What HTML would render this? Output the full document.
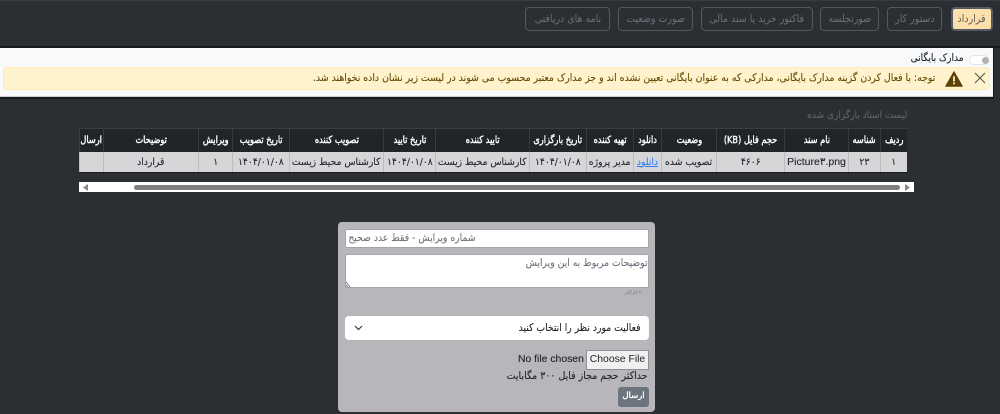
<!DOCTYPE html>
<html lang="fa" dir="rtl"><head><meta charset="utf-8"><title>مدارک</title>
<style>
html,body{margin:0;padding:0;width:1000px;height:414px;overflow:hidden;background:#2b2f33;}
body{position:relative;font-family:"DejaVu Sans","Liberation Sans",sans-serif;font-size:10px;color:#212529;}
.a{position:absolute;box-sizing:border-box;}
.t{position:absolute;white-space:nowrap;direction:rtl;transform-origin:right center;transform:scaleX(.9);-webkit-text-stroke:.12px currentColor;}
.b,.c{position:absolute;box-sizing:border-box;display:flex;justify-content:center;align-items:center;white-space:nowrap;direction:rtl;}
.b{top:7px;height:24px;border:1px solid #53585d;border-radius:4px;color:#6c7177;font-size:10.5px;}
.b span{display:block;flex:none;transform:scaleX(.9);}
.h{top:129px;height:23px;background:#212529;color:#fff;font-size:10px;border-left:1px solid #373b3f;-webkit-text-stroke:.4px #fff;}
.h span{display:block;flex:none;transform:scaleX(.82);}
.d{top:152px;height:20px;background:#d6d6d8;color:#212529;font-size:10px;border-left:1px solid #bdbdc0;-webkit-text-stroke:.1px currentColor;}
.d span{display:block;flex:none;transform:scaleX(.92);}
</style></head><body>
<div class="a" style="left:0;top:0;width:1000px;height:1px;background:#383c41"></div>
<div class="b" style="left:951px;width:42px;background:#fbe0ae;border:2px solid #545b66;color:#5f5a4e"><span>قرارداد</span></div>
<div class="b" style="left:887px;width:55px"><span>دستور کار</span></div>
<div class="b" style="left:820px;width:59px"><span>صورتجلسه</span></div>
<div class="b" style="left:701px;width:112px"><span>فاکتور خرید یا سند مالی</span></div>
<div class="b" style="left:618px;width:75px"><span>صورت وضعیت</span></div>
<div class="b" style="left:525px;width:85px"><span>نامه های دریافتی</span></div>

<div class="a" style="left:0;top:46px;width:1000px;height:2px;background:#17191b"></div>
<div class="a" style="left:0;top:48px;width:993px;height:49px;background:#f8f9fb;border-bottom:1px solid #c9cacb"></div>
<div class="a" style="left:993px;top:47px;width:1px;height:50px;background:#17191b"></div>
<div class="a" style="left:0;top:97px;width:994px;height:2px;background:#17191b"></div>
<div class="t" style="right:36px;top:50px;font-size:10.5px;line-height:16px;color:#212529;transform:scaleX(.86)">مدارک بایگانی</div>
<div class="a" style="left:969px;top:55px;width:20px;height:10px;background:#fff;border:1px solid #e3e4e6;border-radius:6px"></div>
<div class="a" style="left:982px;top:56.5px;width:7px;height:7px;background:#b0b1b3;border-radius:50%"></div>
<div class="a" style="left:3px;top:67px;width:987px;height:23px;background:#fff3cd;border:1px solid #ffedb9;border-radius:4px"></div>
<svg class="a" style="left:973px;top:71px" width="14" height="14" viewBox="0 0 14 14"><path d="M2 2L12 12M12 2L2 12" stroke="#5d5a4c" stroke-width="1.1" fill="none"/></svg>
<svg class="a" style="left:945px;top:71px" width="18" height="16" viewBox="0 0 18 16"><path d="M9 0.8L17.3 15.2H0.7Z" fill="#5c4206" stroke="#5c4206" stroke-linejoin="round"/><rect x="8.1" y="5.3" width="1.8" height="5.2" fill="#fff3cd"/><rect x="8.1" y="11.5" width="1.8" height="1.8" fill="#fff3cd"/></svg>
<div class="t" style="right:65px;top:70px;font-size:10.5px;line-height:17px;color:#664d03;transform:scaleX(.89)">توجه: با فعال کردن گزینه مدارک بایگانی، مدارکی که به عنوان بایگانی تعیین نشده اند و جز مدارک معتبر محسوب می شوند در لیست زیر نشان داده نخواهند شد.</div>

<div class="t" style="right:93px;top:108px;font-size:10px;line-height:16px;color:#5f6368;transform:scaleX(.9)">لیست اسناد بارگزاری شده</div>

<div class="a" style="left:79px;top:128px;width:828px;height:1px;background:#3a3e42"></div>
<div class="c h" style="left:880px;width:27px"><span>ردیف</span></div>
<div class="c h" style="left:848px;width:32px"><span>شناسه</span></div>
<div class="c h" style="left:784px;width:64px"><span>نام سند</span></div>
<div class="c h" style="left:716px;width:68px"><span>حجم فایل (KB)</span></div>
<div class="c h" style="left:661px;width:55px"><span>وضعیت</span></div>
<div class="c h" style="left:633px;width:28px"><span>دانلود</span></div>
<div class="c h" style="left:586px;width:47px"><span>تهیه کننده</span></div>
<div class="c h" style="left:529px;width:57px"><span>تاریخ بارگزاری</span></div>
<div class="c h" style="left:435px;width:94px"><span>تایید کننده</span></div>
<div class="c h" style="left:383px;width:52px"><span>تاریخ تایید</span></div>
<div class="c h" style="left:289px;width:94px"><span>تصویب کننده</span></div>
<div class="c h" style="left:232px;width:57px"><span>تاریخ تصویب</span></div>
<div class="c h" style="left:198px;width:34px"><span>ویرایش</span></div>
<div class="c h" style="left:103px;width:95px"><span>توضیحات</span></div>
<div class="c h" style="left:79px;width:24px"><span>ارسال</span></div>

<div class="c d" style="left:880px;width:27px"><span>۱</span></div>
<div class="c d" style="left:848px;width:32px"><span>۲۳</span></div>
<div class="c d" style="left:784px;width:64px;font-family:'Liberation Sans','DejaVu Sans',sans-serif;font-size:10.5px"><span style="transform:none">Picture۳.png</span></div>
<div class="c d" style="left:716px;width:68px"><span>۴۶۰۶</span></div>
<div class="c d" style="left:661px;width:55px"><span>تصویب شده</span></div>
<div class="c d" style="left:633px;width:28px;color:#2f7df0;text-decoration:underline"><span>دانلود</span></div>
<div class="c d" style="left:586px;width:47px"><span>مدیر پروژه</span></div>
<div class="c d" style="left:529px;width:57px"><span>۱۴۰۴/۰۱/۰۸</span></div>
<div class="c d" style="left:435px;width:94px"><span>کارشناس محیط زیست</span></div>
<div class="c d" style="left:383px;width:52px"><span>۱۴۰۴/۰۱/۰۸</span></div>
<div class="c d" style="left:289px;width:94px"><span>کارشناس محیط زیست</span></div>
<div class="c d" style="left:232px;width:57px"><span>۱۴۰۴/۰۱/۰۸</span></div>
<div class="c d" style="left:198px;width:34px"><span>۱</span></div>
<div class="c d" style="left:103px;width:95px"><span>قرارداد</span></div>
<div class="c d" style="left:79px;width:24px"></div>

<div class="a" style="left:79px;top:172px;width:828px;height:1px;background:#17191b"></div>
<div class="a" style="left:79px;top:182px;width:835px;height:10px;background:#fff"></div>
<div class="a" style="left:134px;top:185px;width:766px;height:5px;background:#7f7f7f;border-radius:3px"></div>
<svg class="a" style="left:83px;top:184px" width="6" height="7"><path d="M5 0V7L0 3.5Z" fill="#8a8a8a"/></svg>
<svg class="a" style="left:905px;top:184px" width="6" height="7"><path d="M0 0V7L5 3.5Z" fill="#8a8a8a"/></svg>

<div class="a" style="left:338px;top:222px;width:317px;height:190px;background:#b8b6bb;border-radius:4px"></div>
<div class="a" style="left:345px;top:229px;width:304px;height:19px;background:#fff;border:1px solid #a5a5a8;border-radius:2px"></div>
<div class="t" style="right:524px;top:230px;font-size:10.5px;line-height:16px;color:#6c757d;transform:scaleX(.88)">شماره ویرایش - فقط عدد صحیح</div>
<div class="a" style="left:345px;top:254px;width:304px;height:34px;background:#fff;border:1px solid #a5a5a8;border-radius:2px"></div>
<div class="t" style="right:352px;top:255px;font-size:10.5px;line-height:16px;color:#6c757d;transform:scaleX(.88)">توضیحات مربوط به این ویرایش</div>
<svg class="a" style="left:345px;top:281px" width="7" height="7"><path d="M1 1L5 6M1 4L3 6" stroke="#555" stroke-width=".7" fill="none"/></svg>
<div class="t" style="right:351px;top:289px;font-size:5px;line-height:8px;color:#85858a">۲۰۰۰ کاراکتر</div>
<div class="a" style="left:345px;top:316px;width:304px;height:24px;background:#fff;border-radius:4px"></div>
<div class="t" style="right:360px;top:320px;font-size:10.5px;line-height:16px;color:#212529;transform:scaleX(.88)">فعالیت مورد نظر را انتخاب کنید</div>
<svg class="a" style="left:354px;top:325px" width="9" height="6"><path d="M1 1L4.5 4.5L8 1" stroke="#343a40" stroke-width="1.2" fill="none"/></svg>
<div class="a" style="left:586px;top:350px;width:63px;height:20px;background:#f0f0f0;border:1px solid #8f8f91;font-family:'Liberation Sans',sans-serif;font-size:10.4px;line-height:18px;text-align:center;white-space:nowrap;color:#212529;direction:ltr">Choose File</div>
<div class="t" style="left:518px;top:350px;direction:ltr;transform:none;font-family:'Liberation Sans',sans-serif;font-size:10.4px;line-height:19px;color:#212529">No file chosen</div>
<div class="t" style="right:352px;top:368px;font-size:10.5px;line-height:16px;color:#212529;transform:scaleX(.9)">حداکثر حجم مجاز فایل ۳۰۰ مگابایت</div>
<div class="a" style="left:618px;top:387px;width:31px;height:20px;background:#6c757d;border-radius:3px;color:#fff;font-size:8.5px;line-height:19px;text-align:center;direction:rtl;-webkit-text-stroke:.3px #fff">ارسال</div>
</body></html>
